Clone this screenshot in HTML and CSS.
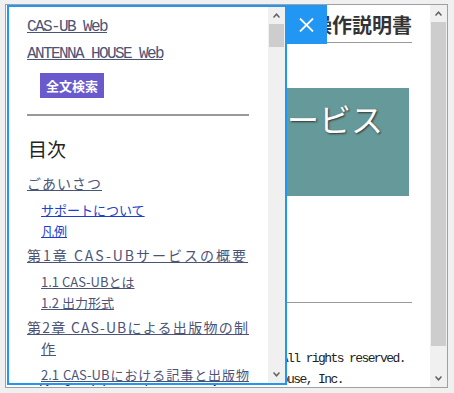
FILE: index.html
```html
<html lang="ja">
  <head>
    <meta charset="UTF-8" />
    <meta name="viewport" content="width=device-width, initial-scale=1.0" />
    <title>CAS-UB 操作説明書</title>
    <link rel="stylesheet" href="styles.css">
  </head>

  <body>
    <div class="frame">
      <div class="doc">
        <h1 class="doc__title">CAS-UBサービス 操作説明書</h1>
        <div class="doc__cover">CAS-UBサービス</div>
        <hr class="doc__rule" />
        <p class="doc__copy">Copyright (C) 2016 CAS-UB Documentation. All rights reserved.
Copyright (C) 2016 published by Antenna House, Inc.</p>
      </div>
      <div class="scrollbar">
        <div class="scrollbar__btn">
          <svg width="7" height="5" viewBox="0 0 7 5"><polyline points="0.5,4.5 3.5,1.2 6.5,4.5" /></svg>
        </div>
        <div class="scrollbar__thumb scrollbar__thumb--page"></div>
        <div class="scrollbar__track"></div>
        <div class="scrollbar__btn">
          <svg width="7" height="5" viewBox="0 0 7 5"><polyline points="0.5,0.5 3.5,3.8 6.5,0.5" /></svg>
        </div>
      </div>

      <nav class="sidebar">
        <div class="sidebar__body">
          <a class="ext-link" href="#">CAS-UB Web</a>
          <a class="ext-link" href="#">ANTENNA HOUSE Web</a>
          <button class="search-btn">全文検索</button>
          <hr class="sidebar__rule" />
          <h2 class="sidebar__heading">目次</h2>
          <ul class="toc">
            <li>
              <a href="#">ごあいさつ</a>
              <ul>
                <li><a class="fresh" href="#">サポートについて</a></li>
                <li><a class="fresh" href="#">凡例</a></li>
              </ul>
            </li>
            <li>
              <a class="wide" href="#">第1章 CAS-UBサービスの概要</a>
              <ul>
                <li><a href="#">1.1 CAS-UBとは</a></li>
                <li><a href="#">1.2 出力形式</a></li>
              </ul>
            </li>
            <li>
              <a href="#">第2章 CAS-UBによる出版物の制作</a>
              <ul>
                <li><a href="#">2.1 CAS-UBにおける記事と出版物の構成</a></li>
                <li><a href="#">2.2 出版物の作成手順</a></li>
              </ul>
            </li>
          </ul>
        </div>
        <div class="scrollbar">
          <div class="scrollbar__btn">
            <svg width="7" height="5" viewBox="0 0 7 5"><polyline points="0.5,4.5 3.5,1.2 6.5,4.5" /></svg>
          </div>
          <div class="scrollbar__thumb scrollbar__thumb--side"></div>
          <div class="scrollbar__track"></div>
          <div class="scrollbar__btn">
            <svg width="7" height="5" viewBox="0 0 7 5"><polyline points="0.5,0.5 3.5,3.8 6.5,0.5" /></svg>
          </div>
        </div>
      </nav>

      <button class="close-btn" aria-label="閉じる">
        <svg width="15" height="14" viewBox="0 0 15 14"><line x1="1" y1="0.5" x2="14" y2="13.5" /><line x1="14" y1="0.5" x2="1" y2="13.5" /></svg>
      </button>
    </div>
  </body>
</html>
```

FILE: styles.css
```css
* {
  box-sizing: border-box;
}
body {
  margin: 0;
  background: #f0f0f0;
  font-family: "Noto Sans CJK JP", sans-serif;
}

.frame {
  position: relative;
  display: flex;
  width: 443px;
  height: 384px;
  margin: 4px 0 0 5px;
  border: 1px solid #a0a0a0;
  background: #fff;
  overflow: hidden;
}

/* page behind the menu */
.doc {
  flex: 1;
  min-width: 0;
  padding: 0 18px;
  overflow: hidden;
}
.doc__title {
  margin: 6px 0 0;
  padding-bottom: 3px;
  border-bottom: 1px solid #999;
  font-size: 20px;
  line-height: 28px;
  font-weight: bold;
  color: #333;
  text-align: right;
  white-space: nowrap;
}
.doc__cover {
  height: 108px;
  margin: 45px 3px 0 0;
  padding: 10px 26px 0 0;
  background: #699;
  color: #fff;
  font-size: 32px;
  line-height: 40px;
  text-align: right;
  white-space: nowrap;
  text-shadow: 1px 1px 2px #333;
}
.doc__rule {
  height: 0;
  margin: 106px 0 0;
  border: 0;
  border-top: 1px solid #999;
}
.doc__copy {
  margin: 45px 0 0;
  padding-left: 2.6px;
  font-family: "Liberation Mono", monospace;
  font-size: 13px;
  letter-spacing: -1.6px;
  line-height: 21px;
  color: #222;
  white-space: pre;
}

/* classic scrollbars */
.scrollbar {
  display: flex;
  flex-direction: column;
  width: 17px;
  flex-shrink: 0;
  background: #f0f0f0;
}
.scrollbar__btn {
  height: 17px;
  display: flex;
  align-items: center;
  justify-content: center;
}
.scrollbar__btn polyline {
  fill: none;
  stroke: #606060;
  stroke-width: 1.5;
}
.scrollbar__thumb {
  margin: 0 1px;
  background: #cdcdcd;
}
.scrollbar__thumb--page {
  height: 324px;
}
.scrollbar__thumb--side {
  height: 23px;
}
.scrollbar__track {
  flex: 1;
}

/* menu overlay */
.sidebar {
  position: absolute;
  left: 1px;
  top: 0;
  width: 280px;
  height: 380px;
  display: flex;
  border: 2px solid #2196f3;
  background: #fff;
}
.sidebar__body {
  flex: 1;
  min-width: 0;
  padding: 7px 19px 0 18px;
  overflow: hidden;
}
.ext-link {
  display: block;
  font-family: "Liberation Mono", monospace;
  font-size: 16px;
  letter-spacing: -1.6px;
  line-height: 27px;
  color: #4b5477;
  white-space: nowrap;
}
.search-btn {
  display: block;
  height: 25px;
  margin: 5px 0 0 13px;
  padding: 0 6px;
  border: 0;
  background: #6a5acd;
  color: #fff;
  font-family: "Noto Sans CJK JP", sans-serif;
  font-size: 13px;
  font-weight: bold;
  line-height: 25px;
}
.sidebar__rule {
  height: 2px;
  margin: 16px 0 0;
  border: 0;
  background: #999;
}
.sidebar__heading {
  margin: 19px 0 0 1px;
  font-size: 19px;
  line-height: 28px;
  font-weight: normal;
  color: #222;
}

.toc {
  margin: 10px 0 0;
  padding: 0;
  list-style: none;
}
.toc > li {
  margin-top: 4px;
  padding-left: 14px;
  text-indent: -14px;
  font-size: 14px;
  letter-spacing: 1px;
  line-height: 21px;
  text-align: justify;
}
.toc > li:first-child {
  margin-top: 0;
}
.toc a.wide {
  letter-spacing: 2px;
}
.toc ul {
  margin: 5px 0 0;
  padding: 0;
  list-style: none;
}
.toc ul li {
  text-indent: 0;
  font-size: 13px;
  letter-spacing: 0;
}
.toc a {
  color: #4b5477;
}
.toc a.fresh {
  color: #1d3fcf;
}

.close-btn {
  position: absolute;
  left: 279px;
  top: 0;
  width: 42px;
  height: 39px;
  padding: 0;
  border: 0;
  background: #2196f3;
  display: flex;
  align-items: center;
  justify-content: center;
}
.close-btn line {
  stroke: #fff;
  stroke-width: 1.8;
}
```
